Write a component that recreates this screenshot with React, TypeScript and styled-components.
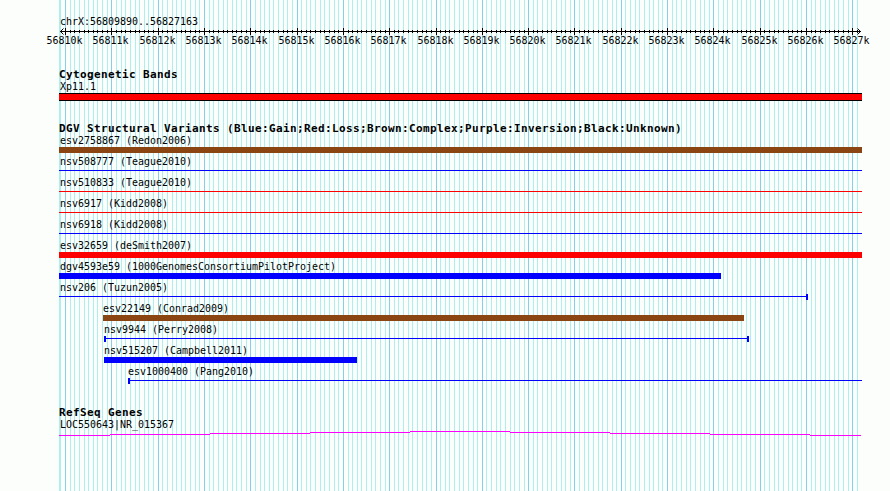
import styled, { createGlobalStyle } from 'styled-components';

const LEFT = 59;
const WIDTH = 803;
const HEIGHT = 491;

// distance between two 100bp grid lines
const STEP = 4.6315;
const FIRST_TICK = 65.53 - LEFT;

type Glyph = 'box' | 'line';

type Feature = {
  name: string;
  start: number;
  end: number;
  color: string;
  glyph: Glyph;
  capStart?: boolean;
  capEnd?: boolean;
};

const BLUE = '#0000ff';
const RED = '#ff0000';
const BROWN = '#8b4513';

const variants: Feature[] = [
  { name: 'esv2758867 (Redon2006)', start: 0, end: 803, color: BROWN, glyph: 'box' },
  { name: 'nsv508777 (Teague2010)', start: 0, end: 803, color: BLUE, glyph: 'line' },
  { name: 'nsv510833 (Teague2010)', start: 0, end: 803, color: RED, glyph: 'line' },
  { name: 'nsv6917 (Kidd2008)', start: 0, end: 803, color: RED, glyph: 'line' },
  { name: 'nsv6918 (Kidd2008)', start: 0, end: 803, color: BLUE, glyph: 'line' },
  { name: 'esv32659 (deSmith2007)', start: 0, end: 803, color: RED, glyph: 'box' },
  { name: 'dgv4593e59 (1000GenomesConsortiumPilotProject)', start: 0, end: 662, color: BLUE, glyph: 'box' },
  { name: 'nsv206 (Tuzun2005)', start: 0, end: 749, color: BLUE, glyph: 'line', capEnd: true },
  { name: 'esv22149 (Conrad2009)', start: 44, end: 685, color: BROWN, glyph: 'box' },
  { name: 'nsv9944 (Perry2008)', start: 45, end: 690, color: BLUE, glyph: 'line', capStart: true, capEnd: true },
  { name: 'nsv515207 (Campbell2011)', start: 45, end: 298, color: BLUE, glyph: 'box' },
  { name: 'esv1000400 (Pang2010)', start: 69, end: 803, color: BLUE, glyph: 'line', capStart: true },
];

const ticks = Array.from({ length: 172 }, (_, i) => ({
  x: Math.floor(FIRST_TICK + LEFT + i * STEP) - LEFT,
  major: i % 10 === 0,
  label: `${56810 + i / 10}k`,
}));

const Grid = () => (
  <GridSvg width={WIDTH} height={HEIGHT} shapeRendering='crispEdges'>
    <rect x={0} y={0} width={2} height={HEIGHT} fill='#afeeee' />
    {ticks.map(({ x, major }) => (
      <rect key={x} x={x} y={0} width={1} height={HEIGHT} fill={major ? '#87ceeb' : '#afeeee'} />
    ))}
  </GridSvg>
);

const Ruler = () => (
  <RulerSvg width={WIDTH} height={20}>
    <g shapeRendering='crispEdges'>
      <rect x={1} y={4} width={801} height={1} />
      {ticks.map(({ x, major }) => (
        <rect key={x} x={x} y={major ? 1 : 3} width={1} height={major ? 7 : 3} />
      ))}
    </g>
    <path d='M4.5 1.5 L1.5 4.5 L4.5 7.5 M798.5 1.5 L801.5 4.5 L798.5 7.5' fill='none' stroke='#000' />
    {ticks
      .filter((tick) => tick.major)
      .map(({ x, label }) => (
        <text key={label} x={x - 18.6} y={17} textLength={36} lengthAdjust='spacingAndGlyphs'>
          {label}
        </text>
      ))}
  </RulerSvg>
);

const FeatureRow = ({ feature }: { feature: Feature }) => (
  <Row $start={feature.start} $end={feature.end}>
    <Label $indent={feature.start === 0 ? 1.4 : -0.4}>{feature.name}</Label>
    {feature.glyph === 'box' ? (
      <Box $color={feature.color} />
    ) : (
      <Line $color={feature.color}>
        <Cap $visible={feature.capStart} />
        <Rule />
        <Cap $visible={feature.capEnd} />
      </Line>
    )}
  </Row>
);

const App = () => {
  return (
    <>
      <GlobalStyle />
      <Browser>
        <Grid />
        <Region>
          <Label $indent={1.4}>chrX:56809890..56827163</Label>
        </Region>
        <Ruler />
        <Track $gap={21}>
          <Heading>Cytogenetic Bands</Heading>
          <Label $indent={1.4}>Xp11.1</Label>
          <Band />
        </Track>
        <Track $gap={21}>
          <Heading>DGV Structural Variants (Blue:Gain;Red:Loss;Brown:Complex;Purple:Inversion;Black:Unknown)</Heading>
          {variants.map((feature) => (
            <FeatureRow key={feature.name} feature={feature} />
          ))}
        </Track>
        <Track $gap={20}>
          <Heading>RefSeq Genes</Heading>
          <Label $indent={1.4}>LOC550643|NR_015367</Label>
          <Gene width={WIDTH} height={5} shapeRendering='crispEdges'>
            {[4, 3, 2, 1, 0, 1, 2, 3, 4].map((y, i) => {
              const x = i === 0 ? 0 : i * 100 - 49;
              const end = i === 8 ? 802 : i * 100 + 51;
              return <rect key={i} x={x} y={y} width={end - x} height={1} />;
            })}
          </Gene>
        </Track>
      </Browser>
    </>
  );
};

export default App;

const GlobalStyle = createGlobalStyle`
  body {
    margin: 0;
    background: #fcfefc;
    color: #000;
    overflow: hidden;
  }
`;

const Browser = styled.main`
  position: relative;
  isolation: isolate;
  box-sizing: border-box;
  width: ${WIDTH}px;
  height: ${HEIGHT}px;
  margin-left: ${LEFT}px;
  padding-top: 15px;
`;

const GridSvg = styled.svg`
  position: absolute;
  inset: 0;
  z-index: -1;
`;

const Region = styled.header`
  height: 12px;
`;

const RulerSvg = styled.svg`
  display: block;
  overflow: visible;

  text {
    font: 11px 'DejaVu Sans Mono', monospace;
  }
`;

const Track = styled.section<{ $gap: number }>`
  display: flex;
  flex-direction: column;
  padding-top: ${({ $gap }) => $gap}px;
`;

const Heading = styled.h2`
  height: 12px;
  margin: 0;
  font: bold 11px/13px 'DejaVu Sans Mono', monospace;
  letter-spacing: 0.378px;
  white-space: nowrap;
`;

const Label = styled.div<{ $indent: number }>`
  width: max-content;
  height: 13px;
  margin-left: ${({ $indent }) => $indent}px;
  font: 11px/13px 'DejaVu Sans Mono', monospace;
  white-space: nowrap;
  transform: scaleX(0.906);
  transform-origin: left;
`;

const Band = styled.div`
  height: 6px;
  border: solid #000;
  border-width: 1px 0;
  background: ${RED};
`;

const Row = styled.div<{ $start: number; $end: number }>`
  width: ${({ $start, $end }) => $end - $start}px;
  height: 21px;
  margin-left: ${({ $start }) => $start}px;
`;

const Box = styled.div<{ $color: string }>`
  height: 6px;
  background: ${({ $color }) => $color};
`;

const Line = styled.div<{ $color: string }>`
  display: flex;
  height: 6px;
  color: ${({ $color }) => $color};
`;

const Rule = styled.div`
  flex: 1;
  height: 1px;
  margin-top: 2px;
  background: currentColor;
`;

const Cap = styled.div<{ $visible?: boolean }>`
  width: ${({ $visible }) => ($visible ? 2 : 0)}px;
  background: currentColor;
`;

const Gene = styled.svg`
  display: block;
  fill: #ff00ff;
`;
